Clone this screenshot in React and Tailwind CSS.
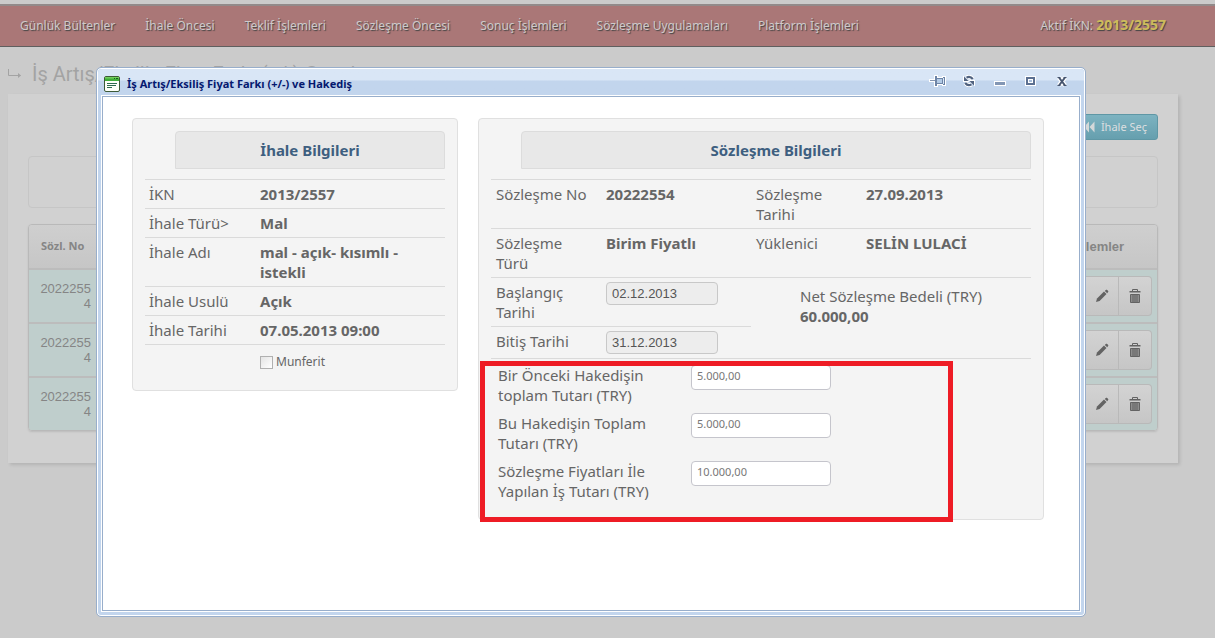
import React from "react";

const menu = [
  "Günlük Bültenler",
  "İhale Öncesi",
  "Teklif İşlemleri",
  "Sözleşme Öncesi",
  "Sonuç İşlemleri",
  "Sözleşme Uygulamaları",
  "Platform İşlemleri",
];

const tenderRows = [
  ["İKN", "2013/2557"],
  ["İhale Türü>", "Mal"],
  ["İhale Adı", "mal - açık- kısımlı - istekli"],
  ["İhale Usulü", "Açık"],
  ["İhale Tarihi", "07.05.2013 09:00"],
];

const amounts = [
  { id: "prev", label: "Bir Önceki Hakedişin toplam Tutarı (TRY)", value: "5.000,00" },
  { id: "current", label: "Bu Hakedişin Toplam Tutarı (TRY)", value: "5.000,00" },
  { id: "work", label: "Sözleşme Fiyatları İle Yapılan İş Tutarı (TRY)", value: "10.000,00" },
];

function PencilIcon() {
  return (
    <svg width="14" height="14" viewBox="0 0 14 14" fill="#636363" aria-hidden="true">
      <path d="M1 13l1-3.6L9 2.6l2.5 2.5-6.9 6.9z" />
      <path d="M9.8 1.9l.9-.9c.5-.5 1-.5 1.5 0l.8.8c.5.5.5 1 0 1.5l-.8.9z" />
    </svg>
  );
}

function TrashIcon() {
  return (
    <svg width="12" height="14" viewBox="0 0 12 14" aria-hidden="true">
      <path d="M3.5 2.500V.5h5v2" fill="none" stroke="#636363" />
      <path d="M.5 2h11v1.500H.5z" fill="#636363" />
      <path d="M1.500 5.500h9v8h-9z" fill="#8e8e8e" stroke="#636363" />
      <path d="M4 5v8M6 5v8M8 5v8" stroke="#636363" />
    </svg>
  );
}

function RewindIcon() {
  return (
    <svg width="14" height="12" viewBox="0 0 14 12" fill="#d4d8d9" aria-hidden="true">
      <path d="M8 .5v11L3 6zM13.500 .5v11L8.500 6z" />
    </svg>
  );
}

function WindowIcon() {
  return (
    <svg width="16" height="16" viewBox="0 0 16 16" aria-hidden="true">
      <rect x=".5" y=".5" width="15" height="15" rx="1.500" fill="#fdfff8" stroke="#3c5a37" />
      <path d="M1 1h14v4H1z" fill="#3fae38" />
      <path d="M1 1h14v1.500H1z" fill="#72cf5c" />
      <path d="M10 2.500h1M12 2.500h2" stroke="#155f1c" />
      <path d="M3 7.500h10M3 9.500h9M3 11.500h5" stroke="#2d6b4e" />
    </svg>
  );
}

function PinIcon() {
  return (
    <svg width="17" height="12" viewBox="0 0 17 12" aria-hidden="true">
      <path d="M0 4h5V0h4v2h4V1h4v10h-4v-1H9v2H5V7H0z" fill="#fff" />
      <path d="M1 5h5v1H1z" fill="#8496b2" />
      <path d="M6 1h2v2h6V2h2v8h-2V9H8v2H6z" fill="#6d84a6" />
      <path d="M8 4h5v4H8z" fill="#b3cbe6" />
      <path d="M14 3h1v6h-1z" fill="#dce8f6" />
    </svg>
  );
}

function RefreshIcon() {
  return (
    <svg width="14" height="12" viewBox="0 0 14 12" aria-hidden="true">
      <g fill="none" stroke="#fff" strokeWidth="4">
        <path d="M4.500 2.600C6.500 1.500 9 1.700 10.800 4M9.500 9.400c-2 1.100-4.500 .9-6.300-1.400" />
      </g>
      <path d="M1 .5v6.500h6.500zM13 11.500V5H6.500z" fill="#fff" />
      <g fill="none" stroke="#50627f" strokeWidth="2.200">
        <path d="M4.500 2.600C6.500 1.500 9 1.700 10.800 4M9.500 9.400c-2 1.100-4.500 .9-6.300-1.400" />
      </g>
      <path d="M2 1.500v4.500h4.500zM12 10.500V6H7.500z" fill="#50627f" />
    </svg>
  );
}

function MinimizeIcon() {
  return (
    <svg width="12" height="12" viewBox="0 0 12 12" aria-hidden="true">
      <path d="M0 6h12v5H0z" fill="#fff" />
      <path d="M1 7h10v3H1z" fill="#8296b4" />
    </svg>
  );
}

function MaximizeIcon() {
  return (
    <svg width="11" height="10" viewBox="0 0 11 10" aria-hidden="true">
      <path d="M0 0h11v10H0z" fill="#fff" />
      <path d="M1 1h9v8H1z" fill="#5c7091" />
      <path d="M3 3h5v4H3z" fill="#fff" />
      <path d="M4 4h3v2H4z" fill="#a9bfdc" />
    </svg>
  );
}

function CloseIcon() {
  return (
    <svg width="12" height="11" viewBox="0 0 12 11" aria-hidden="true">
      <path d="M3 1.500l6 8M9 1.500l-6 8" stroke="#fff" strokeWidth="4.500" />
      <path d="M3 1.500l6 8M9 1.500l-6 8" stroke="#46556f" strokeWidth="2" />
      <path d="M1.500 1.500h3M7.500 1.500h3M1.500 9.500h3M7.500 9.500h3" stroke="#46556f" />
    </svg>
  );
}

const windowTools = [
  { label: "Sabitle", Icon: PinIcon },
  { label: "Yenile", Icon: RefreshIcon },
  { label: "Küçült", Icon: MinimizeIcon },
  { label: "Büyüt", Icon: MaximizeIcon },
  { label: "Kapat", Icon: CloseIcon },
];

function PanelTitle({ children }) {
  return (
    <h2 className="ml-[30px] rounded-t border border-[#dcdcdc] bg-[#e8e8e8] py-[8px] text-center text-[15px] leading-5 font-bold text-[#3e5f80]">
      {children}
    </h2>
  );
}

function NavBar() {
  return (
    <nav className="mt-[4px] flex items-center justify-between border-t-2 border-b border-t-[#928a8a] border-b-[#5f5f5f] bg-[#aa7777] py-[10px] pr-[49px] pl-[20px] text-[12px] leading-5 text-[#cfcaca] text-shadow-[1px_1px_1px_#444444]">
      <ul className="flex gap-[30px] whitespace-nowrap">
        {menu.map((item) => (
          <li key={item}>
            <a href="#">{item}</a>
          </li>
        ))}
      </ul>
      <p className="whitespace-nowrap">
        Aktif İKN: <b className="text-[14px] leading-none font-bold text-[#cdbb5c]">2013/2557</b>
      </p>
    </nav>
  );
}

function ContractList() {
  return (
    <section className="mr-[37px] ml-[8px] bg-[#d1d1d1] px-[20px] pt-[20px] pb-[32px] shadow-[2px_2px_3px_#b4b4b4]">
      <div className="flex justify-end">
        <button className="flex h-[26px] items-center gap-[6px] rounded-[3px] border border-[#5f97a5] bg-linear-to-b from-[#7db3c1] to-[#669fae] px-[10px] text-[11px] text-[#dcdfe0]">
          <RewindIcon />
          İhale Seç
        </button>
      </div>
      <div className="mt-[16px] h-[52px] rounded border border-[#c6c6c6]" />
      <div className="mt-[16px] overflow-hidden rounded border border-[#b9b9b9] shadow-[0_1px_2px_#bbbbbb]">
        <table className="w-full table-fixed border-separate border-spacing-0 font-['Liberation_Sans',Arial,sans-serif] text-[#858585]">
          <thead>
            <tr className="h-[43px] bg-linear-to-b from-[#cfcfcf] to-[#c6c6c6] text-left text-[12px]">
              <th className="w-[73px] pl-[12px] font-['Noto_Sans',sans-serif] text-[11px] whitespace-nowrap">
                Sözl. No
              </th>
              <th />
              <th className="w-[120px] pl-[38px] text-[13px]">İşlemler</th>
            </tr>
          </thead>
          <tbody>
            {[0, 1, 2].map((row) => (
              <tr key={row} className="h-[54px] bg-[#bfcecc]">
                <td className="border-t-2 border-[#bcbcbc] pr-[11px] pl-[10px] text-right text-[13px] leading-[15px] break-all">
                  20222554
                </td>
                <td className="border-t-2 border-[#bcbcbc]" />
                <td className="border-t-2 border-[#bcbcbc] pr-[5px]">
                  <div className="flex justify-end">
                    <button
                      aria-label="Düzenle"
                      className="flex h-[40px] w-[34px] items-center justify-center border border-[#b9b9b9] bg-linear-to-b from-[#d3d3d3] to-[#c6c6c6]"
                    >
                      <PencilIcon />
                    </button>
                    <button
                      aria-label="Sil"
                      className="flex h-[40px] w-[33px] items-center justify-center rounded-r border border-l-0 border-[#b9b9b9] bg-linear-to-b from-[#d3d3d3] to-[#c6c6c6]"
                    >
                      <TrashIcon />
                    </button>
                  </div>
                </td>
              </tr>
            ))}
          </tbody>
        </table>
      </div>
    </section>
  );
}

function TenderPanel() {
  return (
    <section className="self-start rounded border border-[#e0e0e0] bg-[#f4f4f4] px-[12px] pt-[12px] pb-[18px]">
      <PanelTitle>İhale Bilgileri</PanelTitle>
      <table className="mt-[10px] w-full border-b border-[#dadada] text-left text-[15px] leading-5">
        <tbody>
          {tenderRows.map(([label, value]) => (
            <tr key={label} className="border-t border-[#dadada] align-top">
              <th scope="row" className="w-[111px] px-1 py-1 font-normal">{label}</th>
              <td className="px-1 py-1 font-bold">{value}</td>
            </tr>
          ))}
        </tbody>
      </table>
      <label className="mt-[7px] ml-[115px] flex items-center gap-[3px] text-[12px] leading-5">
        <input
          type="checkbox"
          className="size-[13px] appearance-none border border-[#b0b0b0] bg-linear-to-br from-[#e4e4e4] to-white"
        />
        Munferit
      </label>
    </section>
  );
}

function DateInput({ id, value }) {
  return (
    <input
      id={id}
      defaultValue={value}
      readOnly
      className="block h-[23px] w-[112px] rounded border border-[#c8c8c8] bg-[#ededed] px-[5px] font-['Liberation_Sans',Arial,sans-serif] text-[13px] text-[#555555]"
    />
  );
}

function ContractPanel() {
  return (
    <section className="rounded border border-[#e0e0e0] bg-[#f4f4f4] px-[12px] pt-[12px]">
      <PanelTitle>Sözleşme Bilgileri</PanelTitle>
      <table className="mt-[10px] w-full table-fixed border-y border-[#dadada] text-left text-[15px] leading-5">
        <colgroup>
          <col className="w-[110px]" />
          <col className="w-[150px]" />
          <col className="w-[110px]" />
          <col />
        </colgroup>
        <tbody className="align-top">
          <tr>
            <th scope="row" className="px-[5px] py-1 font-normal whitespace-nowrap">Sözleşme No</th>
            <td className="px-[5px] py-1 font-bold">20222554</td>
            <th scope="row" className="px-[5px] py-1 font-normal">Sözleşme Tarihi</th>
            <td className="px-[5px] py-1 font-bold">27.09.2013</td>
          </tr>
          <tr className="border-t border-[#dadada]">
            <th scope="row" className="px-[5px] py-1 font-normal">Sözleşme Türü</th>
            <td className="px-[5px] py-1 font-bold">Birim Fiyatlı</td>
            <th scope="row" className="px-[5px] py-1 font-normal">Yüklenici</th>
            <td className="px-[5px] py-1 font-bold">SELİN LULACİ</td>
          </tr>
          <tr className="border-t border-[#dadada]">
            <th scope="row" className="border-b border-[#dadada] px-[5px] py-1 font-normal">
              <label htmlFor="start">Başlangıç Tarihi</label>
            </th>
            <td className="border-b border-[#dadada] px-[5px] py-1">
              <DateInput id="start" value="02.12.2013" />
            </td>
            <td colSpan={2} rowSpan={2} className="pt-[8px] pl-[49px]">
              <p>Net Sözleşme Bedeli (TRY)</p>
              <p className="font-bold">60.000,00</p>
            </td>
          </tr>
          <tr>
            <th scope="row" className="px-[5px] py-1 font-normal whitespace-nowrap">
              <label htmlFor="end">Bitiş Tarihi</label>
            </th>
            <td className="px-[5px] py-1">
              <DateInput id="end" value="31.12.2013" />
            </td>
          </tr>
        </tbody>
      </table>
      <div className="relative pt-[6px] pl-[7px] pb-[6px]">
        <div className="flex flex-col gap-2 pb-[12px]">
          {amounts.map(({ id, label, value }) => (
            <div key={id} className="flex items-start gap-[33px]">
              <label htmlFor={id} className="w-[160px] text-[15px] leading-5">{label}</label>
              <input
                id={id}
                defaultValue={value}
                className="h-[25px] w-[140px] rounded border border-[#c5c5cc] bg-white px-[5px] pb-[4px] text-[11px] text-[#777777]"
              />
            </div>
          ))}
        </div>
        <div className="pointer-events-none absolute top-[2px] right-[78px] -bottom-[3px] -left-[11px] border-[5px] border-[#ee1c25]" />
      </div>
    </section>
  );
}

function Dialog() {
  return (
    <div
      role="dialog"
      aria-labelledby="dialog-title"
      className="flex flex-1 flex-col rounded-[5px] border border-[#98aecb] bg-[#c2d5ed] shadow-[inset_0_0_0_1px_#ffffff]"
    >
      <header className="m-px flex h-[27px] items-center justify-between rounded-t bg-linear-to-b from-[#d9e6f6] from-40% to-[#c2d5ed] to-45% pr-[7px] pl-[6px]">
        <h1
          id="dialog-title"
          className="flex items-center gap-[7px] pt-[3px] text-[11px] leading-4 font-bold whitespace-nowrap text-[#04186f]"
        >
          <WindowIcon />
          İş Artış/Eksiliş Fiyat Farkı (+/-) ve Hakediş
        </h1>
        <div className="flex items-center pb-[3px]">
          {windowTools.map(({ label, Icon }) => (
            <button key={label} aria-label={label} className="flex w-[31px] justify-center">
              <Icon />
            </button>
          ))}
        </div>
      </header>
      <div className="mx-[4px] mb-[4px] -mt-[2px] flex-1 border border-white">
        <div className="grid h-full grid-cols-[326fr_566fr] items-start gap-[20px] border border-[#98aecb] bg-white pt-[21px] pr-[35px] pl-[29px] text-[#666666]">
          <TenderPanel />
          <ContractPanel />
        </div>
      </div>
    </div>
  );
}

export default function App() {
  return (
    <div className="relative flow-root min-h-screen bg-[#cbcbcb] font-['Noto_Sans','Open_Sans',sans-serif]">
      <NavBar />
      <div className="flex h-[47px] items-center gap-[10px] pt-[6px] pl-[8px] whitespace-nowrap text-[#a3a3a3]">
        <svg width="14" height="10" viewBox="0 0 14 10" fill="none" stroke="#a3a3a3" aria-hidden="true">
          <path d="M.5 0v6.500h12" />
          <path d="M10 4l3 2.500L10 9z" fill="#a3a3a3" stroke="none" />
        </svg>
        <p className="font-[Roboto,'Open_Sans',sans-serif] text-[20px] leading-7">
          İş Artış/Eksiliş Fiyat Farkı (+/-) Genel
        </p>
      </div>
      <ContractList />
      <div className="absolute inset-0 flex pt-[67px] pr-[129px] pb-[21px] pl-[96px]">
        <Dialog />
      </div>
    </div>
  );
}
